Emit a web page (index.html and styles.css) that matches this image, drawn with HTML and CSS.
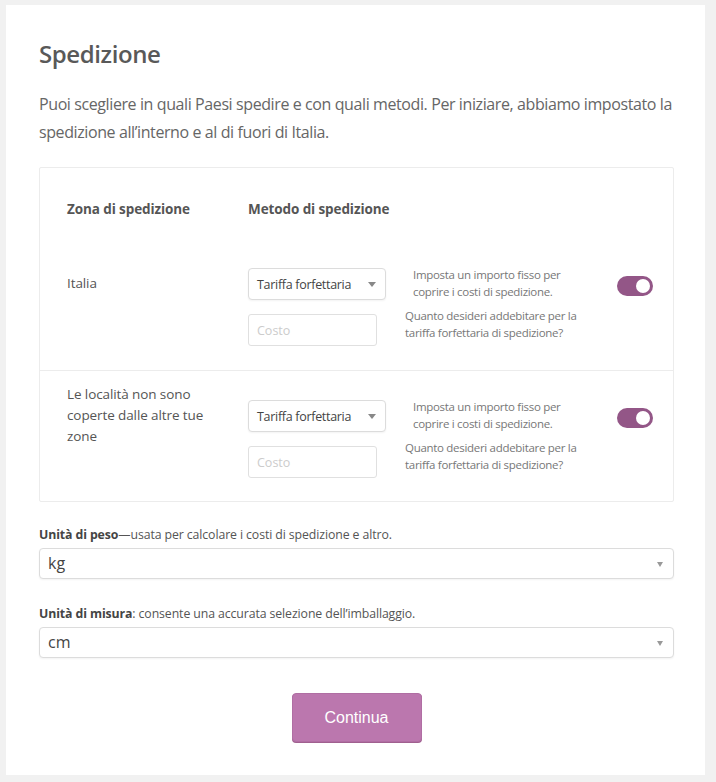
FILE: index.html
```html
<!DOCTYPE html>
<html lang="it">

<head>
  <meta charset="UTF-8">
  <title>Spedizione</title>
  <link rel="stylesheet" href="styles.css">
</head>

<body>
  <div class="card">
    <h1 class="title">Spedizione</h1>
    <p class="intro">Puoi scegliere in quali Paesi spedire e con quali metodi. Per iniziare, abbiamo impostato la spedizione all’interno e al di fuori di Italia.</p>

    <div class="zones">
      <div class="zones-head">
        <span>Zona di spedizione</span>
        <span>Metodo di spedizione</span>
      </div>

      <div class="zone-row">
        <div class="zone-name">Italia</div>
        <div class="methods">
          <div class="method-line">
            <div class="select select-small">Tariffa forfettaria<span class="arrow"></span></div>
            <p class="hint hint-top">Imposta un importo fisso per coprire i costi di spedizione.</p>
          </div>
          <div class="method-line">
            <input class="cost" placeholder="Costo">
            <p class="hint hint-cost">Quanto desideri addebitare per la tariffa forfettaria di spedizione?</p>
          </div>
        </div>
        <div class="toggle"><span class="knob"></span></div>
      </div>

      <div class="zone-row zone-row-last">
        <div class="zone-name zone-name-tall">Le località non sono coperte dalle altre tue zone</div>
        <div class="methods">
          <div class="method-line">
            <div class="select select-small">Tariffa forfettaria<span class="arrow"></span></div>
            <p class="hint hint-top">Imposta un importo fisso per coprire i costi di spedizione.</p>
          </div>
          <div class="method-line">
            <input class="cost" placeholder="Costo">
            <p class="hint hint-cost">Quanto desideri addebitare per la tariffa forfettaria di spedizione?</p>
          </div>
        </div>
        <div class="toggle"><span class="knob"></span></div>
      </div>
    </div>

    <div class="field">
      <label class="field-label"><b>Unità di peso</b>—usata per calcolare i costi di spedizione e altro.</label>
      <div class="select select-wide">kg<span class="arrow"></span></div>
    </div>

    <div class="field field-second">
      <label class="field-label"><b>Unità di misura</b>: consente una accurata selezione dell’imballaggio.</label>
      <div class="select select-wide">cm<span class="arrow"></span></div>
    </div>

    <div class="actions">
      <button class="btn">Continua</button>
    </div>
  </div>
</body>

</html>
```

FILE: styles.css
```css
body {
  margin: 5px 11px 0 6px;
  background-color: #f1f1f1;
  font-family: "Open Sans", "Noto Sans", sans-serif;
  color: #555;
}

.card {
  background: #fff;
  padding: 34px 31px 33px 33px;
  box-shadow: 0 1px 2px rgba(0, 0, 0, 0.06);
}

.title {
  margin: 0;
  font-size: 24px;
  line-height: 30px;
  font-weight: 600;
  color: #595959;
  letter-spacing: -0.4px;
}

.intro {
  margin: 21px 0 0;
  font-size: 16px;
  line-height: 28px;
  color: #666;
  letter-spacing: -0.4px;
}

.zones {
  margin-top: 21px;
  border: 1px solid #ececec;
  border-radius: 2px;
  padding: 31px 20px 0 27px;
}

.zones-head {
  display: flex;
  font-size: 13.5px;
  line-height: 20px;
  font-weight: 700;
  color: #555;
  letter-spacing: -0.1px;
}

.zones-head span:first-child {
  width: 181px;
}

.zone-row {
  display: grid;
  grid-template-columns: 181px 1fr 36px;
  align-items: start;
  padding: 49px 0 24px;
}

.zone-row-last {
  border-top: 1px solid #ececec;
  margin: 0 -20px 0 -27px;
  padding: 29px 20px 23px 27px;
}

.zone-name {
  font-size: 13.5px;
  line-height: 21px;
  color: #555;
  margin-top: 5px;
  padding-right: 30px;
  letter-spacing: -0.1px;
}

.zone-name-tall {
  margin-top: -16px;
}

.methods {
  display: flex;
  flex-direction: column;
  gap: 14px;
}

.method-line {
  display: flex;
  align-items: flex-start;
}

.select {
  position: relative;
  box-sizing: border-box;
  border: 1px solid #dcdcdc;
  border-radius: 4px;
  background: #fff;
  color: #444;
  box-shadow: 0 1px 2px rgba(0, 0, 0, 0.05);
}

.select-small {
  width: 138px;
  height: 32px;
  padding: 0 8px;
  font-size: 12.5px;
  line-height: 31px;
  letter-spacing: -0.3px;
}

.arrow {
  position: absolute;
  right: 9px;
  top: 50%;
  margin-top: -2px;
  border-left: 4px solid transparent;
  border-right: 4px solid transparent;
  border-top: 5px solid #888;
}

.cost {
  box-sizing: border-box;
  width: 129px;
  height: 32px;
  margin: 0;
  border: 1px solid #e0e0e0;
  border-radius: 3px;
  padding: 0 8px;
  font-family: inherit;
  font-size: 12.5px;
  outline: none;
}

.cost::placeholder {
  color: #ccc;
}

.hint {
  margin: 0;
  font-size: 11.5px;
  line-height: 17px;
  color: #777;
  width: 180px;
  letter-spacing: -0.3px;
}

.hint-top {
  margin: -2px 0 0 27px;
  width: 170px;
}

.hint-cost {
  margin: -7px 0 0 28px;
}

.toggle {
  position: relative;
  width: 36px;
  height: 20px;
  margin-top: 8px;
  border-radius: 10px;
  background: #935687;
}

.knob {
  position: absolute;
  right: 3px;
  top: 3px;
  width: 14px;
  height: 14px;
  border-radius: 50%;
  background: #fff;
}

.field {
  margin-top: 23px;
}

.field-second {
  margin-top: 25px;
}

.field-label {
  display: block;
  font-size: 12.3px;
  line-height: 20px;
  color: #555;
  letter-spacing: -0.1px;
}

.field-label b {
  font-weight: 700;
  color: #444;
}

.select-wide {
  margin-top: 3px;
  height: 31px;
  padding: 0 8px;
  font-size: 16px;
  line-height: 29px;
  color: #444;
}

.select-wide .arrow {
  right: 10px;
  border-left-width: 3.5px;
  border-right-width: 3.5px;
  border-top-width: 5px;
  border-top-color: #999;
}

.actions {
  display: flex;
  justify-content: center;
  margin-top: 35px;
}

.btn {
  width: 130px;
  height: 49px;
  border: 1px solid #b06ea3;
  border-radius: 4px;
  background: #bb77ae;
  color: #fff;
  font-family: "Liberation Sans", Arial, sans-serif;
  font-size: 16px;
  cursor: pointer;
  box-shadow: 0 1px 0 #a0608f;
}
```
